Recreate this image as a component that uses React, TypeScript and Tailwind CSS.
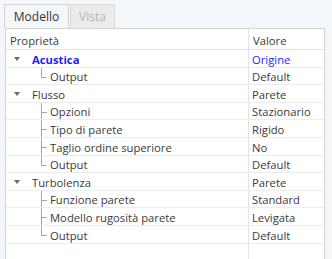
type Row = { label: string; value: string; level: 0 | 1; last?: boolean; accent?: boolean };

const rows: Row[] = [
  { label: "Acustica", value: "Origine", level: 0, accent: true },
  { label: "Output", value: "Default", level: 1, last: true },
  { label: "Flusso", value: "Parete", level: 0 },
  { label: "Opzioni", value: "Stazionario", level: 1 },
  { label: "Tipo di parete", value: "Rigido", level: 1 },
  { label: "Taglio ordine superiore", value: "No", level: 1 },
  { label: "Output", value: "Default", level: 1, last: true },
  { label: "Turbolenza", value: "Parete", level: 0 },
  { label: "Funzione parete", value: "Standard", level: 1 },
  { label: "Modello rugosità parete", value: "Levigata", level: 1 },
  { label: "Output", value: "Default", level: 1, last: true },
];

export default function App() {
  return (
    <div
      className="w-[332px] h-[259px] bg-[#f4f7f9] overflow-hidden text-[11.25px] text-[#3a3a3a] flex flex-col pt-1 pl-[5px]"
      style={{ fontFamily: '"Open Sans", "Noto Sans", sans-serif' }}
    >
      {/* tabs */}
      <div className="flex h-6 -ml-[1px]">
        <div className="w-[65px] border border-b-0 border-[#d4d4d4] bg-[#f4f7f9] flex items-center justify-center text-[#333] text-[12px]">
          Modello
        </div>
        <div className="w-[45px] ml-[1px] border border-b-0 border-[#d9d9d9] bg-[#ebebeb] flex items-center justify-center text-[#b4b4b4] text-[12px]">
          Vista
        </div>
      </div>

      {/* property grid */}
      <div className="flex-1 w-[320px] bg-white border-l border-r border-t border-[#d4d4d4] flex flex-col">
        <div className="flex h-[21px] border-b border-[#e3e3e3]">
          <div className="w-[242px] pl-[4px] pt-[4px] flex items-center">Proprietà</div>
          <div className="flex-1 border-l border-[#e3e3e3] pl-[4px] pt-[4px] flex items-center">Valore</div>
        </div>
        {rows.map((r, i) => (
          <div key={i} className="flex h-[17.6px] border-b border-[#ececec]">
            <div className="w-[242px] relative flex items-center pt-[2px]">
              {r.level === 0 ? (
                <>
                  <span className="absolute left-[8px] top-[7px] w-0 h-0 border-l-[3px] border-r-[3px] border-t-[4px] border-l-transparent border-r-transparent border-t-[#6b6b6b]" />
                  <span className={`pl-[26px] leading-none ${r.accent ? "font-bold text-[#1f1ff0]" : ""}`}>{r.label}</span>
                </>
              ) : (
                <>
                  <span className={`absolute left-[35px] top-0 w-px bg-[#a8a8a8] ${r.last ? "h-[9px]" : "h-full"}`} />
                  <span className="absolute left-[35px] top-[9px] w-[6px] h-px bg-[#a8a8a8]" />
                  <span className="pl-[44px] leading-none">{r.label}</span>
                </>
              )}
            </div>
            <div className={`flex-1 border-l border-[#e3e3e3] pl-[3px] pt-[2px] flex items-center leading-none ${r.accent ? "text-[#1f1ff0]" : ""}`}>
              {r.value}
            </div>
          </div>
        ))}
        <div className="flex flex-1">
          <div className="w-[242px]" />
          <div className="flex-1 border-l border-[#e3e3e3]" />
        </div>
      </div>
    </div>
  );
}
